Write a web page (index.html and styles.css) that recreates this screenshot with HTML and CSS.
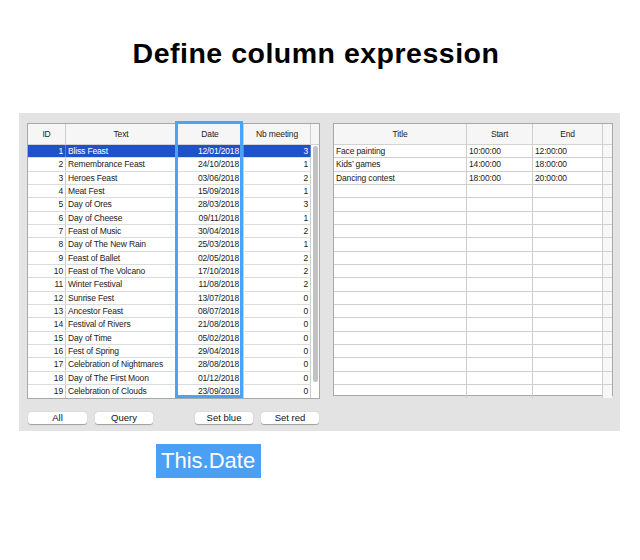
FILE: index.html
```html
<!DOCTYPE html>
<html>
<head>
<meta charset="utf-8">
<link rel="stylesheet" href="styles.css">
</head>
<body>
<h1 class="title">Define column expression</h1>
<div class="panel">
  <div class="tables">
    <div class="left-wrap">
      <div class="tbl ltbl">
        <div class="lrow head">
          <div class="c">ID</div><div class="c">Text</div><div class="c">Date</div><div class="c">Nb meeting</div><div class="c blank"></div>
        </div>
        <div class="lbody">
          <div class="lrows">
            <div class="lrow sel"><div class="c r">1</div><div class="c">Bliss Feast</div><div class="c r d">12/01/2018</div><div class="c r">3</div></div>
            <div class="lrow"><div class="c r">2</div><div class="c">Remembrance Feast</div><div class="c r d">24/10/2018</div><div class="c r">1</div></div>
            <div class="lrow"><div class="c r">3</div><div class="c">Heroes Feast</div><div class="c r d">03/06/2018</div><div class="c r">2</div></div>
            <div class="lrow"><div class="c r">4</div><div class="c">Meat Fest</div><div class="c r d">15/09/2018</div><div class="c r">1</div></div>
            <div class="lrow"><div class="c r">5</div><div class="c">Day of Ores</div><div class="c r d">28/03/2018</div><div class="c r">3</div></div>
            <div class="lrow"><div class="c r">6</div><div class="c">Day of Cheese</div><div class="c r d">09/11/2018</div><div class="c r">1</div></div>
            <div class="lrow"><div class="c r">7</div><div class="c">Feast of Music</div><div class="c r d">30/04/2018</div><div class="c r">2</div></div>
            <div class="lrow"><div class="c r">8</div><div class="c">Day of The New Rain</div><div class="c r d">25/03/2018</div><div class="c r">1</div></div>
            <div class="lrow"><div class="c r">9</div><div class="c">Feast of Ballet</div><div class="c r d">02/05/2018</div><div class="c r">2</div></div>
            <div class="lrow"><div class="c r">10</div><div class="c">Feast of The Volcano</div><div class="c r d">17/10/2018</div><div class="c r">2</div></div>
            <div class="lrow"><div class="c r">11</div><div class="c">Winter Festival</div><div class="c r d">11/08/2018</div><div class="c r">2</div></div>
            <div class="lrow"><div class="c r">12</div><div class="c">Sunrise Fest</div><div class="c r d">13/07/2018</div><div class="c r">0</div></div>
            <div class="lrow"><div class="c r">13</div><div class="c">Ancestor Feast</div><div class="c r d">08/07/2018</div><div class="c r">0</div></div>
            <div class="lrow"><div class="c r">14</div><div class="c">Festival of Rivers</div><div class="c r d">21/08/2018</div><div class="c r">0</div></div>
            <div class="lrow"><div class="c r">15</div><div class="c">Day of Time</div><div class="c r d">05/02/2018</div><div class="c r">0</div></div>
            <div class="lrow"><div class="c r">16</div><div class="c">Fest of Spring</div><div class="c r d">29/04/2018</div><div class="c r">0</div></div>
            <div class="lrow"><div class="c r">17</div><div class="c">Celebration of Nightmares</div><div class="c r d">28/08/2018</div><div class="c r">0</div></div>
            <div class="lrow"><div class="c r">18</div><div class="c">Day of The First Moon</div><div class="c r d">01/12/2018</div><div class="c r">0</div></div>
            <div class="lrow last"><div class="c r">19</div><div class="c">Celebration of Clouds</div><div class="c r d">23/09/2018</div><div class="c r">0</div></div>
          </div>
          <div class="track"><div class="thumb"></div></div>
        </div>
      </div>
      <div class="date-hl"></div>
    </div>
    <div class="tbl rtbl">
      <div class="rrow head"><div class="c">Title</div><div class="c">Start</div><div class="c">End</div><div class="c blank"></div></div>
      <div class="rrow"><div class="c">Face painting</div><div class="c">10:00:00</div><div class="c">12:00:00</div><div class="c blank"></div></div>
      <div class="rrow"><div class="c">Kids’ games</div><div class="c">14:00:00</div><div class="c">18:00:00</div><div class="c blank"></div></div>
      <div class="rrow"><div class="c">Dancing contest</div><div class="c">18:00:00</div><div class="c">20:00:00</div><div class="c blank"></div></div>
      <div class="rrow"><div class="c"></div><div class="c"></div><div class="c"></div><div class="c blank"></div></div>
      <div class="rrow"><div class="c"></div><div class="c"></div><div class="c"></div><div class="c blank"></div></div>
      <div class="rrow"><div class="c"></div><div class="c"></div><div class="c"></div><div class="c blank"></div></div>
      <div class="rrow"><div class="c"></div><div class="c"></div><div class="c"></div><div class="c blank"></div></div>
      <div class="rrow"><div class="c"></div><div class="c"></div><div class="c"></div><div class="c blank"></div></div>
      <div class="rrow"><div class="c"></div><div class="c"></div><div class="c"></div><div class="c blank"></div></div>
      <div class="rrow"><div class="c"></div><div class="c"></div><div class="c"></div><div class="c blank"></div></div>
      <div class="rrow"><div class="c"></div><div class="c"></div><div class="c"></div><div class="c blank"></div></div>
      <div class="rrow"><div class="c"></div><div class="c"></div><div class="c"></div><div class="c blank"></div></div>
      <div class="rrow"><div class="c"></div><div class="c"></div><div class="c"></div><div class="c blank"></div></div>
      <div class="rrow"><div class="c"></div><div class="c"></div><div class="c"></div><div class="c blank"></div></div>
      <div class="rrow"><div class="c"></div><div class="c"></div><div class="c"></div><div class="c blank"></div></div>
      <div class="rrow"><div class="c"></div><div class="c"></div><div class="c"></div><div class="c blank"></div></div>
      <div class="rrow"><div class="c"></div><div class="c"></div><div class="c"></div><div class="c blank"></div></div>
      <div class="rrow"><div class="c"></div><div class="c"></div><div class="c"></div><div class="c blank"></div></div>
      <div class="rrow last"><div class="c"></div><div class="c"></div><div class="c"></div><div class="c blank"></div></div>
    </div>
  </div>
  <div class="buttons">
    <button class="btn b-all">All</button>
    <button class="btn b-query">Query</button>
    <button class="btn b-blue">Set blue</button>
    <button class="btn b-red">Set red</button>
  </div>
</div>
<div class="expr">This.Date</div>
</body>
</html>
```
FILE: styles.css
```css
* { box-sizing: border-box; }
html, body { margin: 0; padding: 0; background: #ffffff; }
body {
  width: 640px;
  height: 560px;
  font-family: "Liberation Sans", Arial, sans-serif;
  color: #1a1a1a;
  overflow: hidden;
}
.title {
  margin: 37px 0 0 0;
  padding-right: 8px;
  font-size: 28.5px;
  letter-spacing: 0.5px;
  line-height: 33px;
  font-weight: bold;
  text-align: center;
  color: #000;
}
.panel {
  margin: 43px 0 0 19px;
  width: 601px;
  height: 318px;
  background: #e3e3e3;
  padding: 10px 0 0 8px;
}
.tables {
  display: flex;
  gap: 13px;
  align-items: flex-start;
}
.left-wrap { position: relative; }
.tbl {
  background: #fff;
  border: 1px solid #a8a8a8;
  font-size: 8.5px;
  letter-spacing: -0.15px;
}
.ltbl { width: 293px; }
.rtbl { width: 280px; height: 273px; }
.lrow {
  display: grid;
  grid-template-columns: 38px 111px 67px 67px;
  height: 13.333px;
  border-bottom: 1px solid #dcdcdc;
}
.lrow.head {
  grid-template-columns: 38px 111px 67px 67px 8px;
  height: 21px;
  background: #f6f6f6;
  border-bottom: 1px solid #d2d2d2;
}
.lrow.last, .rrow.last { border-bottom: none; }
.c {
  border-right: 1px solid #cdcdcd;
  padding: 0 2px;
  line-height: 12.5px;
  white-space: nowrap;
  overflow: hidden;
}
.head .c {
  line-height: 20px;
  text-align: center;
  color: #222;
}
.head .c.blank { border-right: none; }
.c.r { text-align: right; }
.c.d { padding-right: 4px; }
.lbody { display: flex; }
.lrows { width: 283px; }
.lrow.sel { background: #2151c9; color: #fff; }
.lrow.sel .c { border-right-color: #5a7fd8; }
.track {
  width: 8px;
  padding: 1px 1px 0 2px;
}
.thumb {
  width: 5px;
  height: 236px;
  background: #c2c2c2;
  border-radius: 3px;
}
.date-hl {
  position: absolute;
  left: 148px;
  top: -2px;
  width: 68px;
  height: 277px;
  border: 3px solid #4ea2f3;
}
.rrow {
  display: grid;
  grid-template-columns: 133px 66px 70px 9px;
  height: 13.333px;
  border-bottom: 1px solid #cfcfcf;
}
.rrow.head {
  height: 21px;
  background: #f6f6f6;
  border-bottom: 1px solid #d2d2d2;
}
.rrow .c.blank { background: #f8f8f8; border-right: none; }
.rrow.head .c.blank { background: #f6f6f6; }
.buttons {
  display: flex;
  margin-top: 13px;
  padding-left: 1px;
}
.btn {
  height: 12px;
  padding: 0;
  border: none;
  border-radius: 3px;
  background: #fff;
  box-shadow: 0 0.5px 1px rgba(0,0,0,0.3);
  font-family: "Liberation Sans", Arial, sans-serif;
  font-size: 9.5px;
  line-height: 12px;
  color: #111;
}
.b-all { width: 59px; }
.b-query { width: 58px; margin-left: 8px; }
.b-blue { width: 58px; margin-left: 42px; }
.b-red { width: 58px; margin-left: 8px; }
.expr {
  margin: 13px 0 0 156px;
  width: 105px;
  height: 34px;
  background: #4aa0f5;
  color: #fff;
  font-size: 22px;
  line-height: 34px;
  padding-left: 5px;
}
```
